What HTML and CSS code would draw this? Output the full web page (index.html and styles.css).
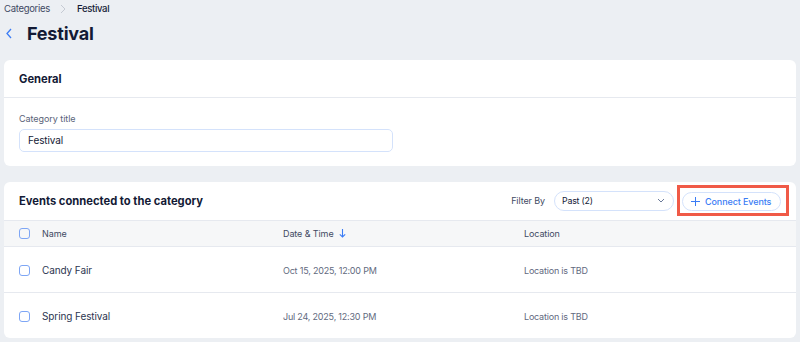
FILE: index.html
```html
<!DOCTYPE html>
<html lang="en">
<head>
    <meta charset="UTF-8">
    <title>Festival</title>
    <link rel="stylesheet" href="styles.css">
</head>
<body>
    <div class="page">
        <div class="breadcrumbs">
            <span class="crumb">Categories</span>
            <svg class="crumb-sep" width="6" height="10" viewBox="0 0 6 10"><path d="M1 1l4 4-4 4" fill="none" stroke="#c5cad3" stroke-width="1"/></svg>
            <span class="crumb current">Festival</span>
        </div>

        <div class="title-row">
            <svg class="back" width="6" height="11" viewBox="0 0 6 11"><path d="M5 1L1 5.5 5 10" fill="none" stroke="#3b7cf5" stroke-width="1.3"/></svg>
            <h1>Festival</h1>
        </div>

        <div class="card">
            <div class="card-header">
                <h2>General</h2>
            </div>
            <div class="card-body">
                <label class="field-label" for="title">Category title</label>
                <input class="text-input" id="title" type="text" value="Festival">
            </div>
        </div>

        <div class="card events">
            <div class="card-header toolbar">
                <h2>Events connected to the category</h2>
                <div class="actions">
                    <span class="filter-label">Filter By</span>
                    <div class="select">
                        <span>Past (2)</span>
                        <svg width="8" height="5" viewBox="0 0 8 5"><path d="M1 1l3 3 3-3" fill="none" stroke="#6b7a99" stroke-width="1"/></svg>
                    </div>
                    <div class="highlight">
                        <button class="connect-btn">
                            <svg width="9" height="9" viewBox="0 0 9 9"><path d="M4.5 0v9M0 4.5h9" stroke="#3b7cf5" stroke-width="1"/></svg>
                            Connect Events
                        </button>
                    </div>
                </div>
            </div>

            <table class="events-table">
                <thead>
                    <tr>
                        <th class="col-check"><span class="checkbox"></span></th>
                        <th class="col-name">Name</th>
                        <th class="col-date">Date &amp; Time <svg width="7" height="9" viewBox="0 0 7 9"><path d="M3.5 0v8M0.8 5.3l2.7 2.7 2.7-2.7" fill="none" stroke="#3b7cf5" stroke-width="1.1"/></svg></th>
                        <th>Location</th>
                    </tr>
                </thead>
                <tbody>
                    <tr>
                        <td class="col-check"><span class="checkbox"></span></td>
                        <td class="name">Candy Fair</td>
                        <td class="muted">Oct 15, 2025, 12:00 PM</td>
                        <td class="muted">Location is TBD</td>
                    </tr>
                    <tr>
                        <td class="col-check"><span class="checkbox"></span></td>
                        <td class="name">Spring Festival</td>
                        <td class="muted">Jul 24, 2025, 12:30 PM</td>
                        <td class="muted">Location is TBD</td>
                    </tr>
                </tbody>
            </table>
        </div>
    </div>
</body>
</html>
```

FILE: styles.css
```css
:root {
    --bg: #eceff3;
    --card: #ffffff;
    --text: #131a35;
    --text-secondary: #5a6379;
    --muted: #626a80;
    --blue: #3b7cf5;
    --divider: #e6e9ef;
    --input-border: #d4e2fb;
}

* {
    box-sizing: border-box;
    margin: 0;
    padding: 0;
}

body {
    font-family: 'Inter', 'Noto Sans', Arial, sans-serif;
    background: var(--bg);
    color: var(--text);
    width: 800px;
    height: 342px;
    overflow: hidden;
}

.page {
    padding: 0 4px;
}

.breadcrumbs {
    display: flex;
    align-items: center;
    height: 17px;
    font-size: 9.5px;
    letter-spacing: -0.3px;
    gap: 10px;
}

.crumb {
    color: #3f4a63;
}

.crumb.current {
    color: var(--text);
    font-weight: 500;
    margin-left: 1px;
}

.title-row {
    display: flex;
    align-items: center;
    height: 32px;
    padding-left: 2px;
    margin-bottom: 11px;
}

.back {
    margin-right: 15px;
}

h1 {
    font-size: 18px;
    font-weight: 700;
    letter-spacing: -0.2px;
}

.card {
    background: var(--card);
    border-radius: 6px;
    margin-bottom: 16px;
    overflow: hidden;
}

.card-header {
    height: 38px;
    display: flex;
    align-items: center;
    padding: 0 15px;
    border-bottom: 1px solid var(--divider);
}

h2 {
    font-size: 11.2px;
    font-weight: 700;
}

.card-body {
    padding: 15px 15px 14px;
}

.field-label {
    display: block;
    font-size: 9px;
    letter-spacing: -0.05px;
    color: var(--text-secondary);
    margin-bottom: 4px;
}

.text-input {
    width: 374px;
    height: 23px;
    border: 1px solid var(--input-border);
    border-radius: 5px;
    padding: 0 8px;
    font-family: inherit;
    font-size: 10px;
    letter-spacing: -0.1px;
    color: var(--text);
    outline: none;
}

.toolbar {
    justify-content: space-between;
    border-bottom: none;
    padding-right: 7px;
}

.actions {
    display: flex;
    align-items: center;
}

.filter-label {
    font-size: 9px;
    letter-spacing: -0.1px;
    color: #3f4a63;
    margin-right: 9px;
}

.select {
    width: 120px;
    height: 20px;
    border: 1px solid var(--input-border);
    border-radius: 10px;
    display: flex;
    align-items: center;
    justify-content: space-between;
    padding: 0 8px 0 7px;
    font-size: 8.8px;
    letter-spacing: -0.2px;
    color: var(--text);
}

.highlight {
    margin-left: 3px;
    border: 3px solid #f05a47;
    padding: 4px 5px 2px 2px;
}

.connect-btn {
    width: 99px;
    height: 19px;
    padding: 0 0 0 8px;
    border: 1px solid var(--input-border);
    border-radius: 10px;
    background: #fff;
    color: var(--blue);
    font-family: inherit;
    font-size: 9px;
    letter-spacing: -0.1px;
    font-weight: 500;
    display: flex;
    align-items: center;
    gap: 5px;
}

.events-table {
    width: 100%;
    border-collapse: collapse;
}

.events-table th {
    background: #f6f7f8;
    height: 26px;
    font-size: 9px;
    letter-spacing: -0.1px;
    font-weight: 400;
    color: #3f4a63;
    text-align: left;
    border-top: 1px solid var(--divider);
    border-bottom: 1px solid var(--divider);
}

.events-table td {
    height: 46px;
    padding-top: 2px;
    font-size: 9px;
    letter-spacing: -0.2px;
    border-bottom: 1px solid var(--divider);
}

.events-table tr:last-child td {
    border-bottom: none;
}

.col-check {
    width: 38px;
    padding-left: 15px;
}

.col-name {
    width: 241px;
}

.col-date {
    width: 241px;
}

.col-date svg {
    margin-left: 3px;
    vertical-align: -1px;
}

.checkbox {
    display: block;
    width: 11px;
    height: 11px;
    border: 1.2px solid #7ea6f5;
    border-radius: 3px;
}

.events-table td.name {
    font-size: 10px;
    letter-spacing: -0.1px;
    color: #2c3550;
}

.muted {
    color: var(--muted);
}
```
